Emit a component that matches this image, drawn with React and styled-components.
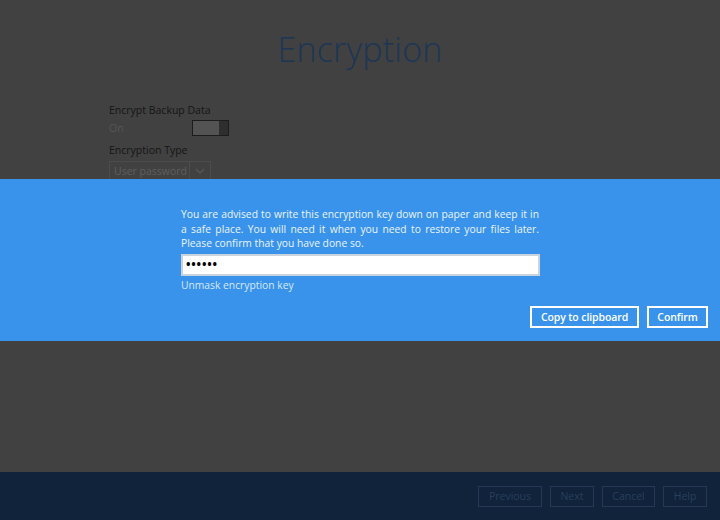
import React from "react";
import styled, { createGlobalStyle } from "styled-components";

const Global = createGlobalStyle`
  html, body { margin: 0; padding: 0; }
  body { font-family: "Open Sans", "Noto Sans", sans-serif; background: #414141; }
  * { box-sizing: border-box; }
`;

const Page = styled.div`
  position: relative;
  width: 720px;
  height: 520px;
  display: flex;
  flex-direction: column;
  overflow: hidden;
`;

const Main = styled.div`
  flex: 1;
  background: #414141;
  display: flex;
  flex-direction: column;
  padding: 26px 0 0 109px;
`;

const Title = styled.h1`
  margin: 0 0 0 -109px;
  text-align: center;
  font-weight: 300;
  font-size: 34px;
  line-height: 46px;
  color: #1c3656;
  letter-spacing: 0.2px;
`;

const Form = styled.div`
  margin-top: 30px;
  display: flex;
  flex-direction: column;
`;

const Label = styled.div`
  font-size: 10.5px;
  line-height: 17px;
  color: #151515;
`;

const ToggleRow = styled.div`
  display: flex;
  align-items: center;
  width: 120px;
  justify-content: space-between;
  height: 18px;
  margin-bottom: 5px;
`;

const Muted = styled.span`
  font-size: 10.5px;
  color: #555;
`;

const Toggle = styled.div`
  width: 37px;
  height: 16px;
  border: 1px solid #1c1c1c;
  background: #535353;
  display: flex;
  justify-content: flex-end;
`;

const Knob = styled.div`
  width: 9px;
  height: 100%;
  background: #2e2e2e;
`;

const Select = styled.div`
  margin-top: 2px;
  width: 102px;
  height: 20px;
  border: 1px solid #4c4c4c;
  display: flex;
  align-items: center;
  font-size: 10.5px;
  color: #5f5f5f;
  padding-left: 4px;
`;

const SelectText = styled.span`
  flex: 1;
`;

const Caret = styled.div`
  width: 21px;
  height: 100%;
  border-left: 1px solid #4c4c4c;
  display: flex;
  align-items: center;
  justify-content: center;
`;

const Footer = styled.div`
  height: 48px;
  background: #10233b;
  display: flex;
  justify-content: flex-end;
  align-items: center;
  gap: 8px;
  padding: 0 13px 0 0;
`;

const FootBtn = styled.div`
  height: 21px;
  border: 1px solid #233955;
  color: #293f5d;
  font-size: 10.5px;
  display: flex;
  align-items: center;
  justify-content: center;
  width: ${(p) => p.$w}px;
`;

const Band = styled.div`
  position: absolute;
  left: 0;
  right: 0;
  top: 179px;
  height: 162px;
  background: #3993ea;
  display: flex;
  flex-direction: column;
  padding: 28px 12px 0 181px;
`;

const Message = styled.p`
  margin: 0;
  width: 358px;
  font-size: 10.3px;
  line-height: 14.5px;
  color: #eaf3fd;
  text-align: justify;
`;

const KeyInput = styled.div`
  margin-top: 3px;
  width: 359px;
  height: 22px;
  background: #fff;
  border: 2px solid #c9d3dc;
  display: flex;
  align-items: center;
  padding-left: 3px;
  font-size: 12px;
  font-weight: 700;
  color: #000;
  letter-spacing: 0.8px;
`;

const Unmask = styled.div`
  margin-top: 2px;
  font-size: 10.3px;
  line-height: 14px;
  color: #d7e8fa;
`;

const Actions = styled.div`
  margin-top: 14px;
  display: flex;
  justify-content: flex-end;
  gap: 8px;
`;

const BandBtn = styled.div`
  height: 22px;
  width: ${(p) => p.$w}px;
  border: 2px solid #ffffff;
  color: #fff;
  font-size: 10.5px;
  font-weight: 600;
  letter-spacing: -0.1px;
  display: flex;
  align-items: center;
  justify-content: center;
`;

export default function App() {
  return (
    <>
      <Global />
      <Page>
        <Main>
          <Title>Encryption</Title>
          <Form>
            <Label>Encrypt Backup Data</Label>
            <ToggleRow>
              <Muted>On</Muted>
              <Toggle>
                <Knob />
              </Toggle>
            </ToggleRow>
            <Label>Encryption Type</Label>
            <Select>
              <SelectText>User password</SelectText>
              <Caret>
                <svg width="10" height="6" viewBox="0 0 10 6">
                  <path d="M1 1 L5 5 L9 1" fill="none" stroke="#555" strokeWidth="1.6" />
                </svg>
              </Caret>
            </Select>
          </Form>
        </Main>
        <Footer>
          <FootBtn $w={64}>Previous</FootBtn>
          <FootBtn $w={44}>Next</FootBtn>
          <FootBtn $w={53}>Cancel</FootBtn>
          <FootBtn $w={44}>Help</FootBtn>
        </Footer>
        <Band>
          <Message>
            You are advised to write this encryption key down on paper and keep it in a safe place. You will need it when you need to restore your files later. Please confirm that you have done so.
          </Message>
          <KeyInput>••••••</KeyInput>
          <Unmask>Unmask encryption key</Unmask>
          <Actions>
            <BandBtn $w={109}>Copy to clipboard</BandBtn>
            <BandBtn $w={61}>Confirm</BandBtn>
          </Actions>
        </Band>
      </Page>
    </>
  );
}
